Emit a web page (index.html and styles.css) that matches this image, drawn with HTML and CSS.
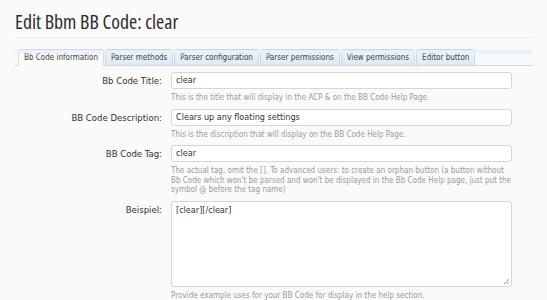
FILE: index.html
```html
<!DOCTYPE html>
<html>
<head>
<meta charset="utf-8">
<link rel="stylesheet" href="styles.css">
</head>
<body>
<div class="page">
  <h1 class="title">Edit Bbm BB Code: clear</h1>
  <div class="tabbar">
    <ul class="tabs">
      <li class="tab active">Bb Code information</li>
      <li class="tab">Parser methods</li>
      <li class="tab">Parser configuration</li>
      <li class="tab">Parser permissions</li>
      <li class="tab">View permissions</li>
      <li class="tab">Editor button</li>
    </ul>
  </div>
  <div class="form">
    <div class="row">
      <div class="label">Bb Code Title:</div>
      <div class="field">
        <div class="input">clear</div>
        <div class="hint">This is the title that will display in the ACP &amp; on the BB Code Help Page.</div>
      </div>
    </div>
    <div class="row">
      <div class="label">BB Code Description:</div>
      <div class="field">
        <div class="input">Clears up any floating settings</div>
        <div class="hint">This is the discription that will display on the BB Code Help Page.</div>
      </div>
    </div>
    <div class="row">
      <div class="label">BB Code Tag:</div>
      <div class="field">
        <div class="input">clear</div>
        <div class="hint">The actual tag, omit the []. To advanced users: to create an orphan button (a button without Bb Code which won't be parsed and won't be displayed in the Bb Code Help page, just put the symbol @ before the tag name)</div>
      </div>
    </div>
    <div class="row">
      <div class="label">Beispiel:</div>
      <div class="field">
        <div class="textarea">[clear][/clear]<svg class="grip" width="7" height="7" viewBox="0 0 7 7"><path d="M6 1L1 6M6 4L4 6" stroke="#9a9a9a" stroke-width="1"/></svg></div>
        <div class="hint">Provide example uses for your BB Code for display in the help section.</div>
      </div>
    </div>
  </div>
</div>
</body>
</html>
```

FILE: styles.css
```css
html, body {
  margin: 0;
  padding: 0;
  background: #fafafb;
}
.page {
  padding: 9px 14px 0 15px;
  font-family: "DejaVu Sans Condensed", "DejaVu Sans", sans-serif;
  font-stretch: condensed;
  color: #333;
}
.title {
  margin: 0;
  padding: 0 0 3px 0;
  font-family: "Open Sans", "Noto Sans", sans-serif;
  font-weight: normal;
  font-size: 19.8px;
  line-height: 25px;
  color: #2d2d2d;
  border-bottom: 1px solid #e4ebf1;
  width: 518px;
}
.tabbar {
  margin-top: 11px;
  width: 518px;
  border-bottom: 1px solid #c9dbe9;
  position: relative;
}
.tabbar::after {
  content: "";
  position: absolute;
  left: 0;
  right: 0;
  top: 1px;
  height: 6px;
  background: linear-gradient(#e6eff8, rgba(250,250,251,0));
}
.tabs {
  list-style: none;
  margin: 0;
  padding: 0 0 0 3px;
  display: flex;
  gap: 1px;
}
.tab {
  height: 15px;
  line-height: 15px;
  padding: 0 5px;
  font-size: 8px;
  color: #3b3b3b;
  border: 1px solid #c6d6e5;
  border-bottom: none;
  border-radius: 3px 3px 0 0;
  background: linear-gradient(#eef4fa, #dfeaf5);
  margin-bottom: -1px;
}
.tab.active {
  background: #fafafb;
  border-color: #d0dde8;
  height: 16px;
}
.form {
  margin-top: 6px;
  display: flex;
  flex-direction: column;
  gap: 6px;
}
.row {
  display: grid;
  grid-template-columns: 147px 341px;
  column-gap: 9px;
}
.label {
  text-align: right;
  font-size: 9.5px;
  line-height: 17px;
  color: #333;
}
.input, .textarea {
  box-sizing: border-box;
  height: 17px;
  border: 1px solid #d6d6d6;
  border-radius: 3px;
  background: #fff;
  font-size: 9px;
  line-height: 15px;
  padding: 0 4px;
  color: #333;
}
.textarea {
  height: 86px;
  line-height: 14px;
  padding-top: 1px;
  position: relative;
}
.grip {
  position: absolute;
  right: 1px;
  bottom: 1px;
}
.hint {
  margin-top: 4px;
  font-size: 8px;
  line-height: 9.5px;
  color: #9a9a9a;
}
```
